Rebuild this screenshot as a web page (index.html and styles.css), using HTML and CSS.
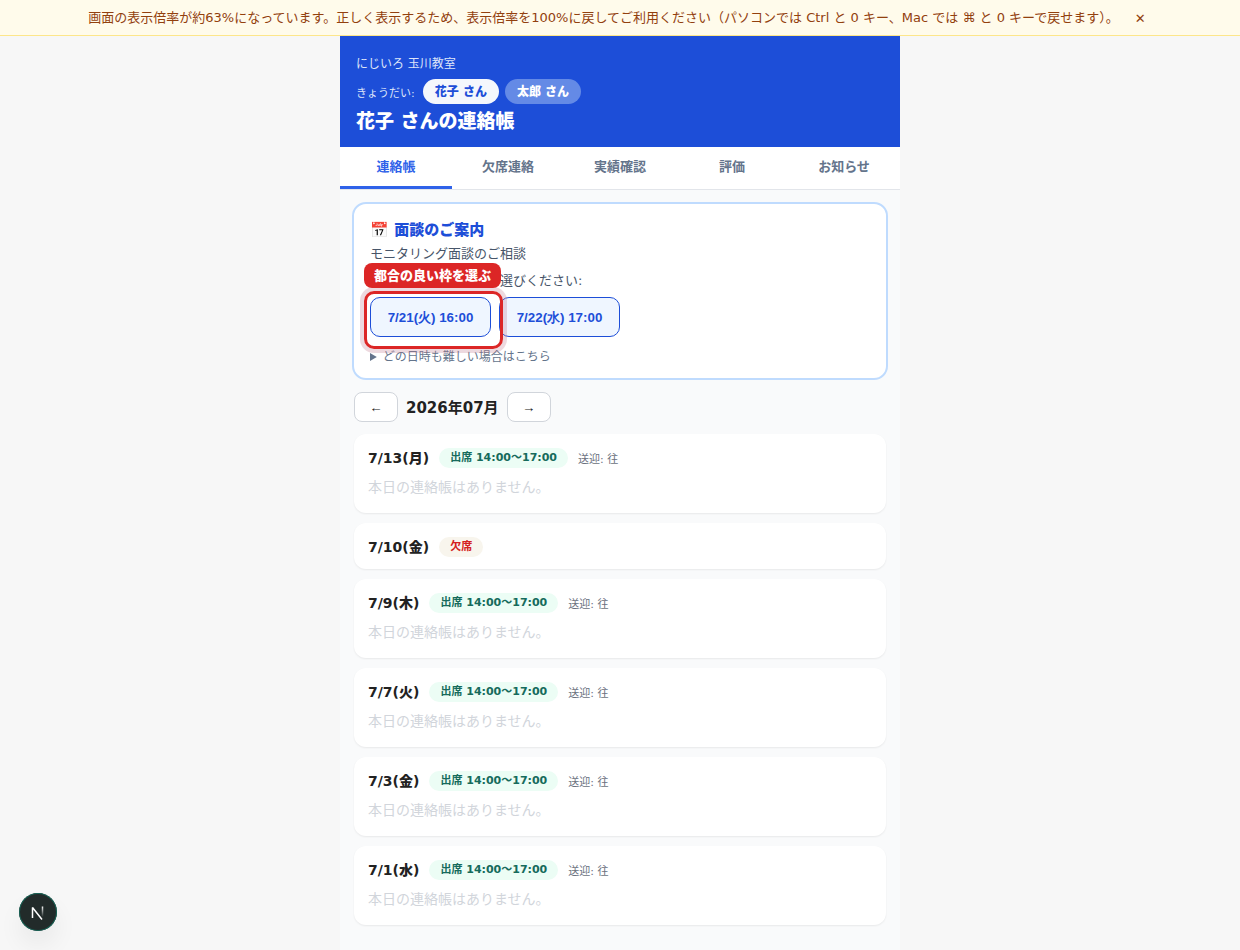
FILE: index.html
```html
<!DOCTYPE html>
<html lang="ja">
<head>
<meta charset="utf-8">
<meta name="viewport" content="width=device-width, initial-scale=1">
<title>花子 さんの連絡帳</title>
<link rel="stylesheet" href="styles.css">
</head>
<body>
<div class="zoom-notice" role="status">
  <span>画面の表示倍率が約63%になっています。正しく表示するため、表示倍率を100%に戻してご利用ください（パソコンでは Ctrl と 0 キー、Mac では ⌘ と 0 キーで戻せます）。</span>
  <button class="zoom-notice-close" type="button" aria-label="閉じる">✕</button>
</div>
<div class="app">
  <header class="header">
    <p class="school">にじいろ 玉川教室</p>
    <div class="siblings">
      <span class="siblings-label">きょうだい:</span>
      <div class="chips">
        <button class="chip chip-active" type="button">花子 さん</button>
        <button class="chip" type="button">太郎 さん</button>
      </div>
    </div>
    <h1 class="title">花子 さんの連絡帳</h1>
  </header>
  <nav class="tabs">
    <button class="tab tab-active" type="button">連絡帳</button>
    <button class="tab" type="button">欠席連絡</button>
    <button class="tab" type="button">実績確認</button>
    <button class="tab" type="button">評価</button>
    <button class="tab" type="button">お知らせ</button>
  </nav>
  <main>
    <section class="meeting">
      <h2 class="meeting-title">📅 面談のご案内</h2>
      <p class="meeting-text">モニタリング面談のご相談</p>
      <p class="meeting-text meeting-prompt">ご都合の良い日時をお選びください:</p>
      <div class="slots">
        <div class="slot-guide">
          <button class="slot" type="button">7/21(火) 16:00</button>
          <span class="guide-ring"></span>
          <span class="guide-label">都合の良い枠を選ぶ</span>
        </div>
        <button class="slot" type="button">7/22(水) 17:00</button>
      </div>
      <details class="meeting-more">
        <summary>どの日時も難しい場合はこちら</summary>
      </details>
    </section>
    <section class="journal">
      <div class="month-nav">
        <button class="month-button" type="button" aria-label="前の月">←</button>
        <h2 class="month">2026年07月</h2>
        <button class="month-button" type="button" aria-label="次の月">→</button>
      </div>
      <article class="entry">
        <div class="entry-head"><h3 class="date">7/13(月)</h3><span class="badge">出席 14:00〜17:00</span><span class="ride">送迎: 往</span></div>
        <p class="entry-empty">本日の連絡帳はありません。</p>
      </article>
      <article class="entry">
        <div class="entry-head"><h3 class="date">7/10(金)</h3><span class="badge badge-absent">欠席</span></div>
      </article>
      <article class="entry">
        <div class="entry-head"><h3 class="date">7/9(木)</h3><span class="badge">出席 14:00〜17:00</span><span class="ride">送迎: 往</span></div>
        <p class="entry-empty">本日の連絡帳はありません。</p>
      </article>
      <article class="entry">
        <div class="entry-head"><h3 class="date">7/7(火)</h3><span class="badge">出席 14:00〜17:00</span><span class="ride">送迎: 往</span></div>
        <p class="entry-empty">本日の連絡帳はありません。</p>
      </article>
      <article class="entry">
        <div class="entry-head"><h3 class="date">7/3(金)</h3><span class="badge">出席 14:00〜17:00</span><span class="ride">送迎: 往</span></div>
        <p class="entry-empty">本日の連絡帳はありません。</p>
      </article>
      <article class="entry">
        <div class="entry-head"><h3 class="date">7/1(水)</h3><span class="badge">出席 14:00〜17:00</span><span class="ride">送迎: 往</span></div>
        <p class="entry-empty">本日の連絡帳はありません。</p>
      </article>
    </section>
  </main>
</div>
<button class="dev-button" type="button" aria-label="開発ツール">
  <svg width="38" height="38" viewBox="0 0 38 38" fill="none" aria-hidden="true">
    <defs>
      <linearGradient id="fade" x1="0" y1="13" x2="0" y2="24" gradientUnits="userSpaceOnUse">
        <stop offset="0" stop-color="#fff"/><stop offset="1" stop-color="#fff" stop-opacity="0"/>
      </linearGradient>
    </defs>
    <path d="M13.5 25V14.500L23 26.500" stroke="#fff" stroke-width="1.500" stroke-linejoin="bevel"/>
    <path d="M23.500 13.500V24" stroke="url(#fade)" stroke-width="1.500"/>
  </svg>
</button>
</body>
</html>
```
FILE: styles.css
```css
* { box-sizing: border-box; }

body {
  margin: 0;
  background: #f7f7f7;
  color: #222;
  font-family: "DejaVu Sans", "Noto Sans CJK JP", sans-serif;
  font-size: 14px;
}

h1, h2, h3, p { margin: 0; }

button { cursor: pointer; }

.zoom-notice {
  display: flex;
  align-items: center;
  justify-content: center;
  gap: 8px;
  min-height: 36px;
  padding: 5px 12px 4px;
  border-bottom: 1px solid #fde68a;
  background: #fffbeb;
  color: #92400e;
  font-size: 13px;
  line-height: 22px;
}

.zoom-notice-close {
  padding: 0 6px 0 8px;
  border: 0;
  background: none;
  color: inherit;
  font-family: inherit;
  font-size: 13px;
}

.app {
  max-width: 560px;
  min-height: calc(100vh - 36px);
  margin: 0 auto;
  background: #f9fafb;
}

.header {
  padding: 18px 16px 13px;
  background: #1d4ed8;
  color: #fff;
}

.school {
  color: #dde5f9;
  font-size: 12px;
  line-height: 20px;
}

.siblings {
  display: flex;
  align-items: center;
  gap: 8px;
  margin-top: 5px;
}

.siblings-label {
  color: #dde5f9;
  font-size: 11px;
}

.chips { display: flex; gap: 6px; }

.chip {
  padding: 1px 12px 0;
  border: 0;
  border-radius: 13px;
  background: #648ae6;
  color: #fff;
  font-family: inherit;
  font-size: 12px;
  font-weight: 900;
  line-height: 24px;
}

.chip-active {
  background: #f4f7fc;
  color: #1d4ed8;
}

.title {
  margin-top: 4px;
  font-size: 19px;
  font-weight: 900;
  line-height: 26px;
}

.tabs {
  display: flex;
  border-bottom: 1px solid #e2e5ea;
  background: #fff;
}

.tab {
  flex: 1;
  padding: 1px 0 0;
  border: 0;
  border-bottom: 3px solid transparent;
  background: none;
  color: #64748b;
  font-family: inherit;
  font-size: 13px;
  font-weight: 700;
  line-height: 38px;
}

.tab-active {
  border-bottom-color: #2f62e9;
  color: #2f62e9;
}

.meeting {
  margin: 12px 12px 0;
  padding: 15px 16px 12px;
  border: 2px solid #bfdbfe;
  border-radius: 14px;
  background: #fff;
}

.meeting-title {
  color: #1d4ed8;
  font-size: 15px;
  font-weight: 900;
  line-height: 22px;
}

.meeting-text {
  margin-top: 2px;
  color: #475569;
  font-size: 13px;
  line-height: 22px;
}

.meeting-prompt { margin-top: 5px; }

.slots {
  display: flex;
  flex-wrap: wrap;
  gap: 8px;
  margin-top: 5px;
}

.slot-guide {
  position: relative;
  display: flex;
}

.slot {
  min-width: 121px;
  height: 40px;
  padding: 2px 16px 0;
  border: 1px solid #1d4ed8;
  border-radius: 10px;
  background: #eff6ff;
  color: #1d4ed8;
  font-weight: 900;
}

.guide-ring {
  position: absolute;
  inset: -6px -12px -12px -6px;
  z-index: 1;
  border: 3px solid #dc2626;
  border-radius: 10px;
  box-shadow: 0 0 0 4px rgba(190, 120, 140, 0.28);
  pointer-events: none;
}

.guide-label {
  position: absolute;
  bottom: 49px;
  left: -6px;
  z-index: 2;
  padding: 1px 10px 0;
  border-radius: 8px;
  background: #dc2626;
  color: #fff;
  font-size: 13px;
  font-weight: 900;
  line-height: 24px;
  white-space: nowrap;
}

.meeting-more {
  margin-top: 9px;
  color: #64748b;
  font-size: 12px;
  line-height: 22px;
}

.journal { padding: 12px 14px 24px; }

.meeting { padding-bottom: 10px; }

.month-nav {
  display: flex;
  align-items: center;
  gap: 8px;
  margin-bottom: 12px;
}

.month-button {
  width: 44px;
  height: 30px;
  padding: 0;
  border: 1px solid #d1d5db;
  border-radius: 8px;
  background: #fff;
  color: #222;
}

.month {
  padding-top: 2px;
  font-size: 15px;
  line-height: 22px;
}

.entry {
  margin-bottom: 10px;
  padding: 14px 14px 12px;
  border-radius: 12px;
  background: #fff;
  box-shadow: 0 1px 2px rgba(0, 0, 0, 0.07);
}

.entry-head {
  display: flex;
  align-items: center;
  gap: 10px;
}

.date {
  font-size: 14px;
  font-weight: 900;
  line-height: 20px;
}

.badge {
  padding: 0 11px;
  border-radius: 10px;
  background: #ecfdf5;
  color: #166b5c;
  font-size: 11px;
  font-weight: 700;
  line-height: 20px;
}

.badge-absent {
  background: #f8f5ed;
  color: #d42020;
}

.ride {
  color: #6b7280;
  font-size: 11px;
}

.entry-empty {
  margin: 8px 0 3px;
  color: #d1d5db;
  font-size: 14px;
  line-height: 22px;
}

.dev-button {
  position: fixed;
  bottom: 19px;
  left: 19px;
  width: 38px;
  height: 38px;
  padding: 0;
  border: 0;
  border-radius: 50%;
  background: #222b2a;
  box-shadow: inset 0 0 0 1px #176457, 0 14px 24px rgba(0, 0, 0, 0.06);
}

.dev-button svg { display: block; }
```
